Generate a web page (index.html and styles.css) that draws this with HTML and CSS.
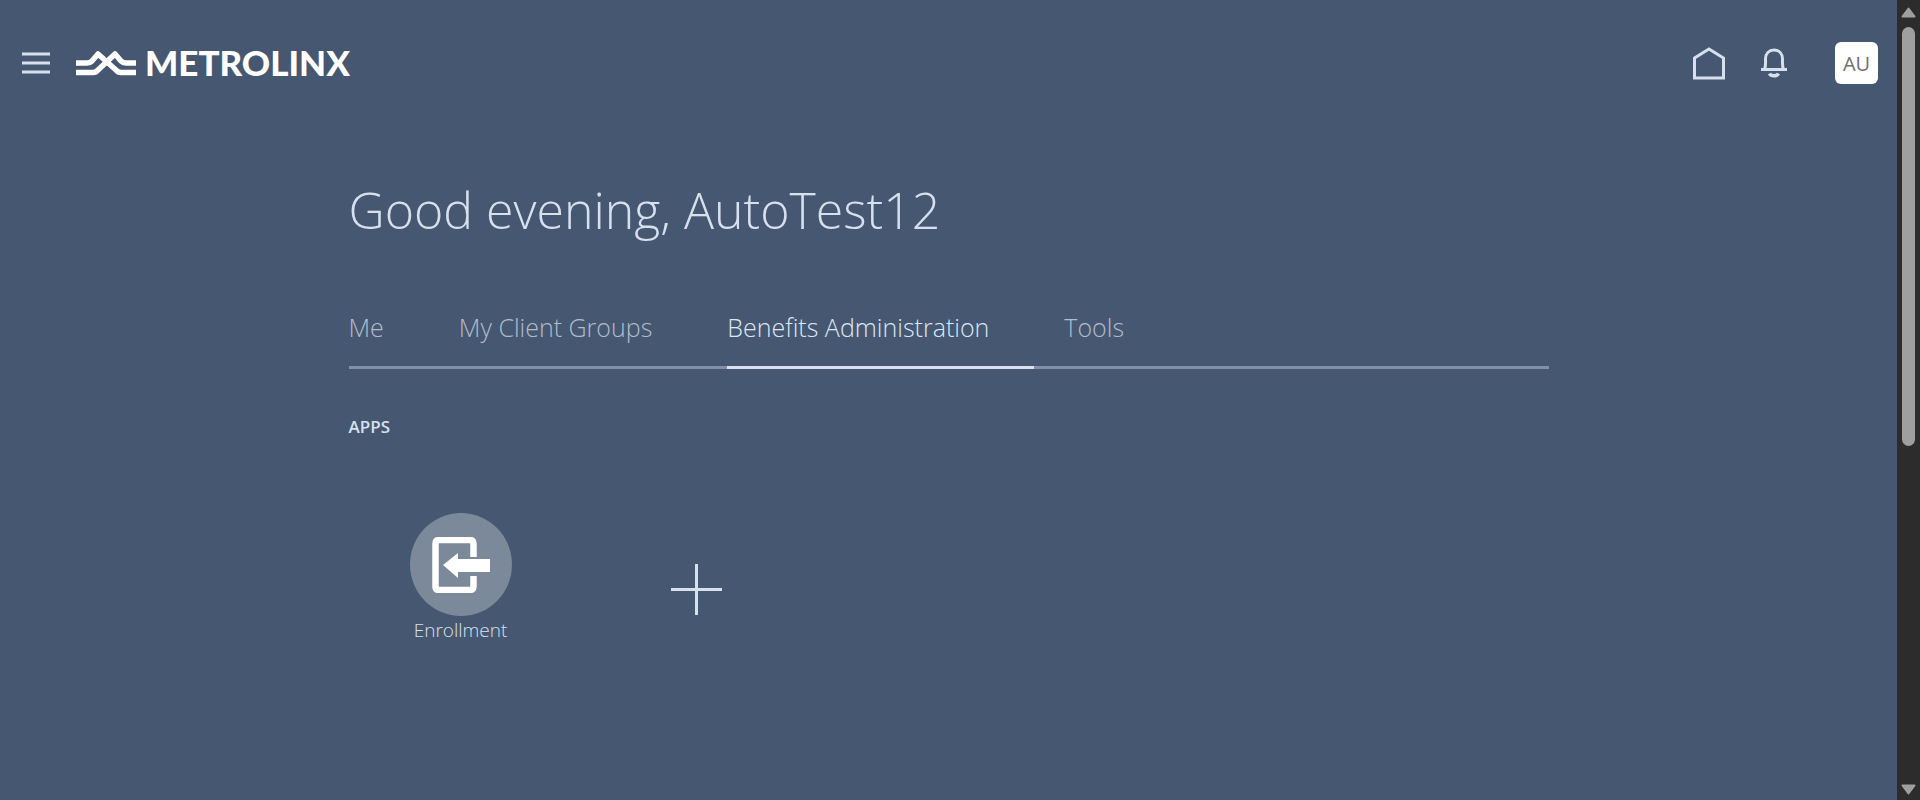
FILE: index.html
```html
<!DOCTYPE html>
<html lang="en">
<head>
<meta charset="utf-8">
<meta name="viewport" content="width=device-width, initial-scale=1">
<title>Metrolinx</title>
<link rel="stylesheet" href="styles.css">
</head>
<body>
<div class="window">
  <div class="page">
    <header class="topbar">
      <button class="icon-button" type="button" aria-label="Navigator">
        <svg width="28" height="22" viewBox="0 0 28 22" fill="none" stroke="#d8e0ee" stroke-width="3"><path d="M0 2H28M0 11H28M0 20H28"/></svg>
      </button>
      <a class="brand" href="#">
        <svg width="60" height="26" viewBox="0 0 60 26" fill="none" stroke="#fff" stroke-width="5.500" stroke-linejoin="round"><path d="M0 13H11Q14 13 16 11L22 4L40 20Q42 22.500 45 22.500H60"/><path d="M0 22.500H17Q20 22.500 22 20L39 4L45 11Q47 13 50 13H60"/></svg>
        <span class="brand-name">METROLINX</span>
      </a>
      <nav class="actions">
        <a class="icon-button" href="#" aria-label="Home">
          <svg width="32" height="33" viewBox="0 0 32 33" fill="none" stroke="#d8e0ee" stroke-width="3"><path d="M1.500 11L16 2L30.500 11V31H1.500Z"/></svg>
        </a>
        <button class="icon-button" type="button" aria-label="Notifications">
          <svg width="26" height="30" viewBox="0 0 26 30" fill="none" stroke="#d8e0ee" stroke-width="3"><path d="M0 21.500H26M3.500 21.500C5 18 4.500 14 4.500 11C4.500 5.500 8 2 13 2S21.500 5.500 21.500 11C21.500 14 21 18 22.500 21.500"/><path d="M8.500 25.500C10 28.500 16 28.500 17.500 25.500" stroke-width="3.500"/></svg>
        </button>
        <button class="avatar" type="button" aria-label="Settings and actions">AU</button>
      </nav>
    </header>
    <main class="content">
      <h1 class="greeting">Good evening, AutoTest12</h1>
      <nav class="tabs">
        <a class="tab" href="#">Me</a>
        <a class="tab" href="#">My Client Groups</a>
        <a class="tab tab-active" href="#" aria-current="page">Benefits Administration</a>
        <a class="tab" href="#">Tools</a>
      </nav>
      <h2 class="section-title">APPS</h2>
      <div class="apps">
        <a class="app" href="#">
          <span class="app-icon">
            <svg width="58" height="56" viewBox="0 0 58 56"><path d="M41.500 20V7Q41.500 3 37.500 3H7Q3.500 3 3.500 7V49Q3.500 53 7 53H37.500Q41.500 53 41.500 49V39" fill="none" stroke="#fff" stroke-width="6.500"/><path d="M11 28L26 16V22H58V35H26V41Z" fill="#fff"/></svg>
          </span>
          <span class="app-name">Enrollment</span>
        </a>
        <button class="app app-add" type="button" aria-label="Add app">
          <svg width="51" height="51" viewBox="0 0 51 51" stroke="#d8e0ee" stroke-width="3"><path d="M0 25.500H51M25.500 0V51"/></svg>
        </button>
      </div>
    </main>
  </div>
  <div class="scrollbar" aria-hidden="true">
    <svg width="15" height="11" viewBox="0 0 15 11"><path d="M7.500 1.500L13.500 9.500H1.500Z" fill="#9f9f9f" stroke="#9f9f9f" stroke-width="2" stroke-linejoin="round"/></svg>
    <div class="track"><div class="thumb"></div></div>
    <svg width="15" height="11" viewBox="0 0 15 11"><path d="M7.500 9.500L13.500 1.500H1.500Z" fill="#9f9f9f" stroke="#9f9f9f" stroke-width="2" stroke-linejoin="round"/></svg>
  </div>
</div>
</body>
</html>
```
FILE: styles.css
```css
* { box-sizing: border-box; }
body {
  margin: 0;
  background: #465771;
  color: #d8e0ee;
  font-family: "Open Sans", "Noto Sans", sans-serif;
}
a { color: inherit; text-decoration: none; }
button { font: inherit; color: inherit; background: none; border: 0; padding: 0; cursor: pointer; }
svg { display: block; }

.window { display: flex; min-height: 100vh; }
.page { flex: 1; min-width: 0; }

.topbar { display: flex; align-items: center; height: 126px; padding: 0 19px 0 22px; }
.brand { display: flex; align-items: center; gap: 9px; margin-left: 26px; color: #fff; }
.brand-name { padding-bottom: 2px; font: 900 35px/40px Lato, "Open Sans", sans-serif; }
.actions { display: flex; align-items: center; margin-left: auto; gap: 36px; }
.avatar {
  width: 43px;
  height: 42px;
  margin-left: 12px;
  border-radius: 6px;
  background: #fff;
  color: #6f6f6f;
  font-size: 20px;
}

.content { width: 100%; max-width: 1200px; margin: 0 auto; padding-top: 44px; }
.greeting { margin: 0; font-size: 50px; line-height: 80px; font-weight: 300; }
.tabs {
  display: flex;
  gap: 30px;
  margin-top: 56px;
  box-shadow: inset 0 -3px #8190a6;
}
.tab {
  padding: 0 45px 18px 0;
  border-bottom: 3px solid transparent;
  font-size: 25px;
  line-height: 42px;
  font-weight: 300;
  color: #b0bbcd;
}
.tab-active { color: #dce8f5; border-color: #dce0ee; }
.section-title { margin: 46px 0 0; font-size: 17px; line-height: 24px; font-weight: 600; }

.apps { display: flex; gap: 12px; margin-top: 74px; }
.app { display: flex; flex-direction: column; align-items: center; width: 224px; }
.app-icon {
  display: grid;
  place-items: center;
  width: 102px;
  height: 103px;
  border-radius: 50%;
  background: #7b899b;
}
.app-name { font-size: 19px; line-height: 28px; font-weight: 300; }
.app-add { justify-content: center; padding-top: 22px; }

.scrollbar {
  display: flex;
  flex-direction: column;
  align-items: center;
  gap: 9px;
  width: 23px;
  padding: 7px 0 5px;
  background: #2c2c2c;
}
.track { flex: 1; }
.thumb { width: 13px; height: 56%; border-radius: 7px; background: #9f9f9f; }
```
